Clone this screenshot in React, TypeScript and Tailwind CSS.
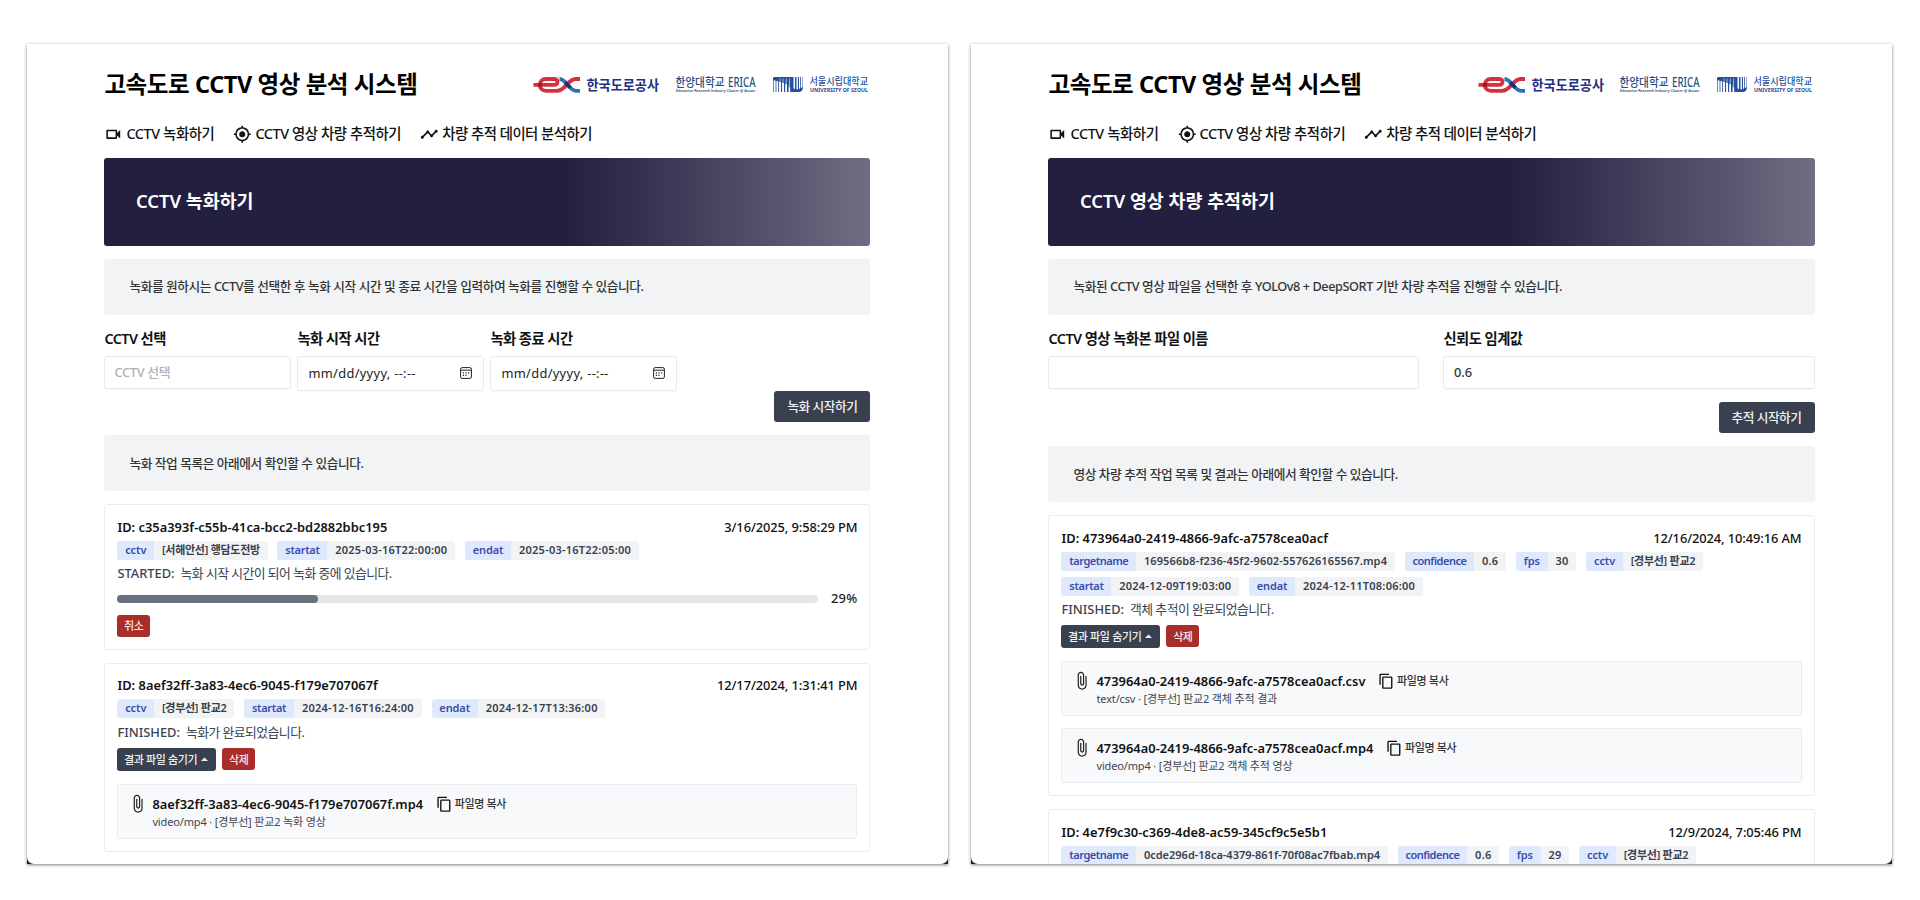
import type { ReactNode } from 'react';
import {
  MdArrowDropUp,
  MdAttachFile,
  MdContentCopy,
  MdMyLocation,
  MdOutlineVideocam,
  MdTimeline,
} from 'react-icons/md';

const LOGO_FONT = '"Noto Sans","Noto Sans CJK KR",sans-serif';

function ExLogo() {
  return (
    <svg width="127" height="20" viewBox="0 0 127 20" className="block overflow-visible">
      <g fill="none" strokeLinecap="butt">
        <path d="M0.5 8.8H21.5C25.5 8.8 25.5 3 21.5 3H13C4.8 3 4.8 14.8 13 14.8H24C32.5 14.8 35 3 42.5 3H47" stroke="#d5303c" strokeWidth="3.8" />
        <path d="M26.5 3C33.5 3 36 14.8 43 14.8H47" stroke="#2f6fb7" strokeWidth="3.8" />
        <path d="M32.2 6.6L37.4 11.6" stroke="#1d2f6f" strokeWidth="3.8" />
        <path d="M5 8.8H9" stroke="#8c1f2a" strokeWidth="3.8" />
      </g>
      <text x="53.5" y="14" fontFamily={LOGO_FONT} fontSize="14" fontWeight="700" fill="#25307f" textLength="72.5" lengthAdjust="spacingAndGlyphs">한국도로공사</text>
    </svg>
  );
}

function EricaLogo() {
  return (
    <svg width="82" height="20" viewBox="0 0 82 20" className="block overflow-visible">
      <text x="0.5" y="10.8" fontFamily={LOGO_FONT} fontSize="12.5" fontWeight="500" fill="#1f4f86" textLength="49" lengthAdjust="spacingAndGlyphs">한양대학교</text>
      <text x="53" y="10.8" fontFamily={LOGO_FONT} fontSize="13.5" fontWeight="500" fill="#1f4f86" textLength="27.5" lengthAdjust="spacingAndGlyphs">ERICA</text>
      <text x="1" y="15.6" fontFamily={LOGO_FONT} fontSize="3.4" fontWeight="600" fill="#1f4f86" textLength="79" lengthAdjust="spacingAndGlyphs">Education Research Industry Cluster @ Ansan</text>
    </svg>
  );
}

function SeoulLogo() {
  return (
    <svg width="96" height="20" viewBox="0 0 96 20" className="block overflow-visible">
      <g fill="#2450a0">
        <path d="M0 4V2.2Q0 1 1.2 1H19V15.5L15 9L9 6.5Z" />
        <path d="M19 1H20.6V16H19ZM22 1H23.5V16H22ZM24.9 1H26V16H24.9ZM27.2 1H28V15H27.2ZM29.2 1H29.7V13H29.2Z" />
        <path d="M0.3 3H1V16H0.3ZM2.6 4H3.4V16H2.6ZM5.2 5H6.1V16H5.2ZM8 6H9.1V16H8ZM11 7H12.2V16H11ZM14 8H15.6V16H14Z" />
        <path d="M17 16L17.5 12L25 13.5L29.7 11V12Q29.7 16 25.5 16Z" />
      </g>
      <g stroke="#fff" strokeWidth="0.6">
        <path d="M7 2.5V8M10 2.5V10M13.2 2.5V12M16.6 2.5V15M21.3 1V11" />
      </g>
      <text x="36.5" y="8.6" fontFamily={LOGO_FONT} fontSize="9.8" fontWeight="500" fill="#2450a0" textLength="58.5" lengthAdjust="spacingAndGlyphs">서울시립대학교</text>
      <text x="37" y="16" fontFamily={LOGO_FONT} fontSize="4.3" fontWeight="700" fill="#2450a0" textLength="58" lengthAdjust="spacingAndGlyphs">UNIVERSITY OF SEOUL</text>
    </svg>
  );
}

function CalendarIcon() {
  return (
    <svg width="12" height="12" viewBox="0 0 12 12" className="block" fill="none" stroke="#222">
      <rect x="0.6" y="0.6" width="10.8" height="10.8" rx="1.6" strokeWidth="1" />
      <path d="M0.6 3.2H11.4" strokeWidth="1" />
      <path d="M5.4 5.9H6.6M8 5.9H9.2M2.8 8.3H4M5.4 8.3H6.6M2.8 5.9H4" strokeWidth="1.2" />
    </svg>
  );
}

function Header() {
  return (
    <>
      <div className="flex h-8 items-center justify-between">
        <h1 className="text-[23.5px] leading-8 font-bold tracking-[-0.41px] text-black">고속도로 CCTV 영상 분석 시스템</h1>
        <div className="flex items-start pt-[3px] pr-[1.5px]">
          <ExLogo />
          <div className="pl-[14.5px]"><EricaLogo /></div>
          <div className="pl-4"><SeoulLogo /></div>
        </div>
      </div>
      <nav className="mt-6 flex h-5 items-center gap-[19px] text-[14.4px] leading-5 font-medium text-[#111]">
        <span className="flex items-center gap-[3.5px] tracking-[-0.4px]"><MdOutlineVideocam className="size-[18.5px]" />CCTV 녹화하기</span>
        <span className="flex items-center gap-[3.5px] tracking-[-0.42px]"><MdMyLocation className="size-[18.5px]" />CCTV 영상 차량 추적하기</span>
        <span className="flex items-center gap-[3.5px] tracking-[-0.5px]"><MdTimeline className="size-[18.5px]" />차량 추적 데이터 분석하기</span>
      </nav>
    </>
  );
}

function Banner({ children }: { children: ReactNode }) {
  return (
    <div className="mt-[14px] flex h-[88px] items-center rounded-[3px] bg-linear-to-r from-[#231f3f] from-60% to-[#706e83] pl-[31.5px] text-[18.4px] font-semibold text-white">
      <span className="pb-0.5">{children}</span>
    </div>
  );
}

function Notice({ children }: { children: ReactNode }) {
  return (
    <div className="flex h-14 items-center rounded-[3px] bg-[#f2f3f5] pl-[25px] text-[12.7px] font-medium tracking-[-0.42px] text-[#333]">
      <span className="pt-px">{children}</span>
    </div>
  );
}

function Label({ children }: { children: ReactNode }) {
  return <div className="h-[27px] text-[14.3px] leading-5 font-semibold tracking-[-0.52px] text-[#111]">{children}</div>;
}

const field = 'flex items-center rounded-[3px] border border-[#e9eaec] bg-white text-[12.85px] shadow-[0_1px_1px_rgba(0,0,0,0.03)]';

function DateField({ label }: { label: string }) {
  return (
    <div className="w-[187px]">
      <Label>{label}</Label>
      <div className={field + ' h-[34.5px] justify-between pr-[11.5px] pl-2.5 tracking-[0.33px] text-[#222]'}>
        mm/dd/yyyy, --:--
        <CalendarIcon />
      </div>
    </div>
  );
}

function PrimaryButton({ children }: { children: ReactNode }) {
  return (
    <button className="h-[31.5px] w-24 rounded-[3px] bg-[#39404f] text-[12.7px] font-medium tracking-[-0.48px] text-[#f1f2f4]">{children}</button>
  );
}

type Tag = { name: string; value: string; korean?: boolean; tight?: boolean };

function Badge({ name, value, korean, tight }: Tag) {
  return (
    <span className="flex h-[19px] overflow-hidden rounded-[3px] text-[11px] leading-[18.5px] font-semibold whitespace-nowrap">
      <span className={'bg-[#dfe9fd] px-[7.8px] text-[#3b4cab] ' + (name.length > 8 ? 'tracking-[-0.48px]' : name.length > 6 ? 'tracking-[-0.3px]' : 'tracking-[-0.1px]')}>{name}</span>
      <span className={'bg-[#f2f3f5] px-[7.8px] text-[#38404d] ' + (korean ? 'tracking-[-0.27px]' : tight ? 'tracking-[0px]' : value.length > 25 ? 'tracking-[0.12px]' : 'tracking-[0.24px]')}>{value}</span>
    </span>
  );
}

function JobCard({ id, date, tags, state, message, children }: { id: string; date: string; tags: Tag[]; state?: string; message?: string; children?: ReactNode }) {
  return (
    <section className="mt-[12.9px] rounded-[3px] border border-[#ebecee] bg-white p-3">
      <div className="-mt-[0.4px] flex h-5 items-center justify-between text-[12.85px] leading-5 text-[#111]">
        <span className="font-semibold tracking-[0.02px]">ID: {id}</span>
        <span className="font-medium tracking-[-0.08px]">{date}</span>
      </div>
      <div className="mt-1 flex flex-wrap gap-x-[9.8px] gap-y-1.5">
        {tags.map((t) => <Badge key={t.name} {...t} />)}
      </div>
      {state && (
        <div className="mt-[4.6px] flex h-[19.4px] items-center gap-1.5 text-[12.85px] text-[#3b4351]">
          <span className="font-medium">{state}:</span>
          <span className="tracking-[-0.55px]">{message}</span>
        </div>
      )}
      {children}
    </section>
  );
}

function DangerButton({ children }: { children: ReactNode }) {
  return <button className="h-[22px] w-[32.5px] rounded-[3px] bg-[#a92d29] text-[11px] leading-none font-medium tracking-[-0.6px] text-[#f7e9e8]">{children}</button>;
}

function Actions() {
  return (
    <div className="mt-[6px] flex items-start gap-1.5">
      <button className="flex h-[22.7px] w-[99px] items-center rounded-[3px] bg-[#39404f] pl-[6.5px] text-[11px] leading-none font-medium tracking-[-0.34px] text-[#f1f2f4]">
        결과 파일 숨기기<MdArrowDropUp className="-ml-px size-[17px]" />
      </button>
      <DangerButton>삭제</DangerButton>
    </div>
  );
}

function FileRow({ name, info }: { name: string; info: string }) {
  return (
    <div className="mt-[12.6px] flex h-[55px] rounded-[3px] border border-[#e8ebef] bg-[#f8f9fb] pt-[9px] pl-[9.5px]">
      <MdAttachFile className="size-[19.5px] text-[#222]" />
      <div className="pl-[5px]">
        <div className="flex h-5 items-center text-[12.85px] leading-5">
          <span className="font-semibold tracking-[0.03px] text-[#111]">{name}</span>
          <MdContentCopy className="ml-[12.5px] size-[16.5px] text-[#111]" />
          <span className="ml-[2.5px] text-[11px] font-medium tracking-[-0.33px] text-[#333]">파일명 복사</span>
        </div>
        <div className="text-[11px] leading-[15px] tracking-[-0.15px] text-[#3f4652]">{info}</div>
      </div>
    </div>
  );
}

function Panel({ children }: { children: ReactNode }) {
  return (
    <main className="h-[820px] w-[921px] overflow-hidden bg-[#222] shadow-[0_1px_3px_rgba(0,0,0,0.5)]">
      <div className="h-full overflow-hidden rounded-b-[7px] bg-white pt-6 pr-[77.6px] pl-[77.4px]">{children}</div>
    </main>
  );
}

export default function App() {
  return (
    <div className="flex h-[900px] w-[1920px] gap-[23.1px] overflow-hidden bg-white pt-11 pl-[27px] whitespace-nowrap [font-family:'Noto_Sans','Noto_Sans_CJK_KR',sans-serif]">
      <Panel>
        <Header />
        <Banner>CCTV 녹화하기</Banner>
        <div className="mt-[12.5px]"><Notice>녹화를 원하시는 CCTV를 선택한 후 녹화 시작 시간 및 종료 시간을 입력하여 녹화를 진행할 수 있습니다.</Notice></div>
        <div className="mt-[14.5px] flex gap-1.5">
          <div className="w-[187px]">
            <Label>CCTV 선택</Label>
            <div className={field + ' h-[33px] pl-[9px] font-medium tracking-[-0.33px] text-[#acb0b9]'}>CCTV 선택</div>
          </div>
          <DateField label="녹화 시작 시간" />
          <DateField label="녹화 종료 시간" />
        </div>
        <div className="flex justify-end"><PrimaryButton>녹화 시작하기</PrimaryButton></div>
        <div className="mt-[13px]"><Notice>녹화 작업 목록은 아래에서 확인할 수 있습니다.</Notice></div>
        <JobCard
          id="c35a393f-c55b-41ca-bcc2-bd2882bbc195"
          date="3/16/2025, 9:58:29 PM"
          tags={[
            { name: 'cctv', value: '[서해안선] 행담도전방', korean: true },
            { name: 'startat', value: '2025-03-16T22:00:00' },
            { name: 'endat', value: '2025-03-16T22:05:00' },
          ]}
          state="STARTED"
          message="녹화 시작 시간이 되어 녹화 중에 있습니다."
        >
          <div className="mt-[6px] flex h-[19px] items-center gap-[13px]">
            <div className="h-2 flex-1 rounded-full bg-[#e4e5e9]"><div className="h-2 w-[28.7%] rounded-full bg-[#69707d]" /></div>
            <span className="text-[12.85px] font-medium tracking-[0.25px] text-[#222]">29%</span>
          </div>
          <div className="mt-[6.5px] flex"><DangerButton>취소</DangerButton></div>
        </JobCard>
        <JobCard
          id="8aef32ff-3a83-4ec6-9045-f179e707067f"
          date="12/17/2024, 1:31:41 PM"
          tags={[
            { name: 'cctv', value: '[경부선] 판교2', korean: true },
            { name: 'startat', value: '2024-12-16T16:24:00' },
            { name: 'endat', value: '2024-12-17T13:36:00' },
          ]}
          state="FINISHED"
          message="녹화가 완료되었습니다."
        >
          <Actions />
          <FileRow name="8aef32ff-3a83-4ec6-9045-f179e707067f.mp4" info="video/mp4 · [경부선] 판교2 녹화 영상" />
        </JobCard>
      </Panel>
      <Panel>
        <Header />
        <Banner>CCTV 영상 차량 추적하기</Banner>
        <div className="mt-[12.5px]"><Notice>녹화된 CCTV 영상 파일을 선택한 후 YOLOv8 + DeepSORT 기반 차량 추적을 진행할 수 있습니다.</Notice></div>
        <div className="mt-[14.5px] grid grid-cols-2 gap-6">
          <div>
            <Label>CCTV 영상 녹화본 파일 이름</Label>
            <div className={field + ' h-[33px]'} />
          </div>
          <div>
            <Label>신뢰도 임계값</Label>
            <div className={field + ' h-[33px] pl-[9.5px] font-medium text-[#333]'}>0.6</div>
          </div>
        </div>
        <div className="mt-[12.5px] flex justify-end"><PrimaryButton>추적 시작하기</PrimaryButton></div>
        <div className="mt-[13px]"><Notice>영상 차량 추적 작업 목록 및 결과는 아래에서 확인할 수 있습니다.</Notice></div>
        <JobCard
          id="473964a0-2419-4866-9afc-a7578cea0acf"
          date="12/16/2024, 10:49:16 AM"
          tags={[
            { name: 'targetname', value: '169566b8-f236-45f2-9602-557626165567.mp4' },
            { name: 'confidence', value: '0.6' },
            { name: 'fps', value: '30' },
            { name: 'cctv', value: '[경부선] 판교2', korean: true },
            { name: 'startat', value: '2024-12-09T19:03:00' },
            { name: 'endat', value: '2024-12-11T08:06:00' },
          ]}
          state="FINISHED"
          message="객체 추적이 완료되었습니다."
        >
          <Actions />
          <FileRow name="473964a0-2419-4866-9afc-a7578cea0acf.csv" info="text/csv · [경부선] 판교2 객체 추적 결과" />
          <FileRow name="473964a0-2419-4866-9afc-a7578cea0acf.mp4" info="video/mp4 · [경부선] 판교2 객체 추적 영상" />
        </JobCard>
        <JobCard
          id="4e7f9c30-c369-4de8-ac59-345cf9c5e5b1"
          date="12/9/2024, 7:05:46 PM"
          tags={[
            { name: 'targetname', value: '0cde296d-18ca-4379-861f-70f08ac7fbab.mp4', tight: true },
            { name: 'confidence', value: '0.6' },
            { name: 'fps', value: '29' },
            { name: 'cctv', value: '[경부선] 판교2', korean: true },
          ]}
        />
      </Panel>
    </div>
  );
}
